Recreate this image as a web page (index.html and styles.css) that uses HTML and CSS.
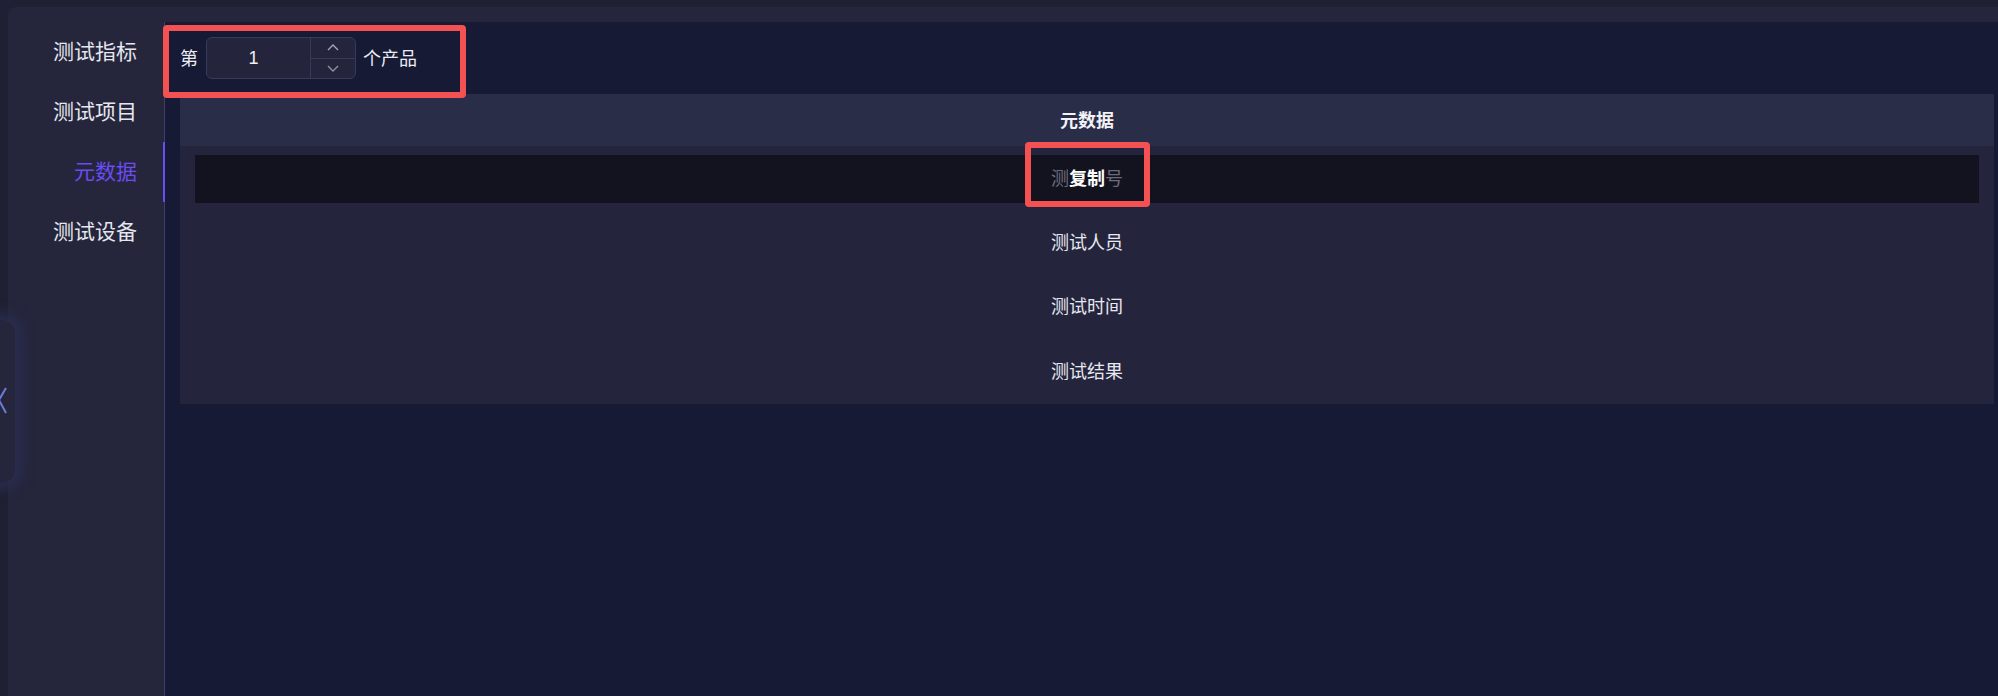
FILE: index.html
```html
<!DOCTYPE html>
<html lang="zh">
<head>
<meta charset="utf-8">
<link rel="stylesheet" href="styles.css">
</head>
<body>
<div class="handle">
  <svg class="handle-icon" width="10" height="28" viewBox="0 0 10 28"><path d="M8 1 L1 13 L8 26" fill="none" stroke="#6d7bd8" stroke-width="2"/></svg>
</div>
<div class="card">
  <nav class="sidebar">
    <div class="tab">测试指标</div>
    <div class="tab">测试项目</div>
    <div class="tab active">元数据</div>
    <div class="tab">测试设备</div>
  </nav>
  <main class="main">
    <div class="toolbar">
      <span class="label">第</span>
      <div class="num-input">
        <div class="num-value">1</div>
        <div class="num-steps">
          <div class="step"><svg width="12" height="7" viewBox="0 0 12 7"><path d="M1 6 L6 1 L11 6" fill="none" stroke="#a4a7bc" stroke-width="1.4"/></svg></div>
          <div class="step"><svg width="12" height="7" viewBox="0 0 12 7"><path d="M1 1 L6 6 L11 1" fill="none" stroke="#8e91a8" stroke-width="1.4"/></svg></div>
        </div>
      </div>
      <span class="label">个产品</span>
    </div>
    <div class="table">
      <div class="thead">元数据</div>
      <div class="row"><div class="row-hl"><span class="dim">测</span><b class="copy">复制</b><span class="dim">号</span></div></div>
      <div class="row">测试人员</div>
      <div class="row">测试时间</div>
      <div class="row">测试结果</div>
    </div>
  </main>
</div>
<div class="mark mark-1"></div>
<div class="mark mark-2"></div>
</body>
</html>
```
FILE: styles.css
```css
* { box-sizing: border-box; }
html, body { margin: 0; padding: 0; }
body {
  width: 1998px;
  height: 696px;
  overflow: hidden;
  background: #1f2033;
  font-family: "Noto Sans CJK SC", "Noto Sans", sans-serif;
  color: #e8e8f0;
  position: relative;
}
.card {
  margin: 7px 0 0 8px;
  height: 689px;
  background: #25263c;
  border-radius: 8px 0 0 0;
  padding-top: 15px;
  display: flex;
}
.sidebar {
  width: 157px;
  flex: none;
  border-right: 1px solid #3b3f6e;
}
.tab {
  height: 60px;
  display: flex;
  align-items: center;
  justify-content: flex-end;
  padding-right: 27px;
  padding-bottom: 4px;
  font-size: 21px;
  color: #e6e6ee;
  position: relative;
}
.tab.active { color: #6a4cf2; }
.tab.active::after {
  content: "";
  position: absolute;
  right: -1px;
  top: 0;
  width: 2px;
  height: 60px;
  background: #6a4cf2;
}
.main {
  flex: 1;
  background: #161a35;
  padding: 15px 4px 0 15px;
}
.toolbar {
  height: 42px;
  display: flex;
  align-items: center;
  margin-bottom: 15px;
}
.label { font-size: 18px; color: #ececf3; padding-bottom: 2px; }
.num-input {
  width: 150px;
  height: 42px;
  margin: 0 7px 0 8px;
  border: 1px solid #383b58;
  border-radius: 6px;
  background: #24253c;
  display: flex;
}
.num-value {
  flex: 1;
  display: flex;
  align-items: center;
  justify-content: center;
  font-size: 18px;
  font-family: "Liberation Sans", sans-serif;
  color: #f0f0f5;
  padding-right: 10px;
}
.num-steps {
  width: 45px;
  border-left: 1px solid #383b58;
  display: flex;
  flex-direction: column;
}
.step {
  flex: 1;
  display: flex;
  align-items: center;
  justify-content: center;
}
.step + .step { border-top: 1px solid #383b58; }
.table {
  background: #24253d;
}
.thead {
  height: 52px;
  background: #2a2d48;
  display: flex;
  align-items: center;
  justify-content: center;
  padding-bottom: 2px;
  font-size: 18px;
  font-weight: bold;
  color: #f2f2f7;
}
.row {
  height: 64.5px;
  display: flex;
  align-items: center;
  justify-content: center;
  padding-bottom: 4px;
  font-size: 18px;
  color: #e8e8f0;
}
.row:nth-child(2) { padding-bottom: 0; }
.row-hl {
  align-self: stretch;
  flex: 1;
  margin: 9px 15px 8px;
  padding-bottom: 3px;
  background: #13131f;
  display: flex;
  align-items: center;
  justify-content: center;
}
.dim { color: #6c6c7c; }
.copy { color: #ffffff; font-weight: bold; }
.mark {
  position: absolute;
  border: 6px solid #f45252;
  border-radius: 4px;
}
.mark-1 { left: 163px; top: 25px; width: 303px; height: 73px; }
.mark-2 { left: 1025px; top: 142px; width: 125px; height: 65px; }
.handle {
  position: absolute;
  left: -22px;
  top: 320px;
  width: 37px;
  height: 163px;
  border-radius: 14px;
  background: #25263c;
  box-shadow: 0 0 14px 6px #2b2e52;
  z-index: 2;
}
.handle-icon {
  position: absolute;
  left: 20px;
  top: 67px;
}
```
